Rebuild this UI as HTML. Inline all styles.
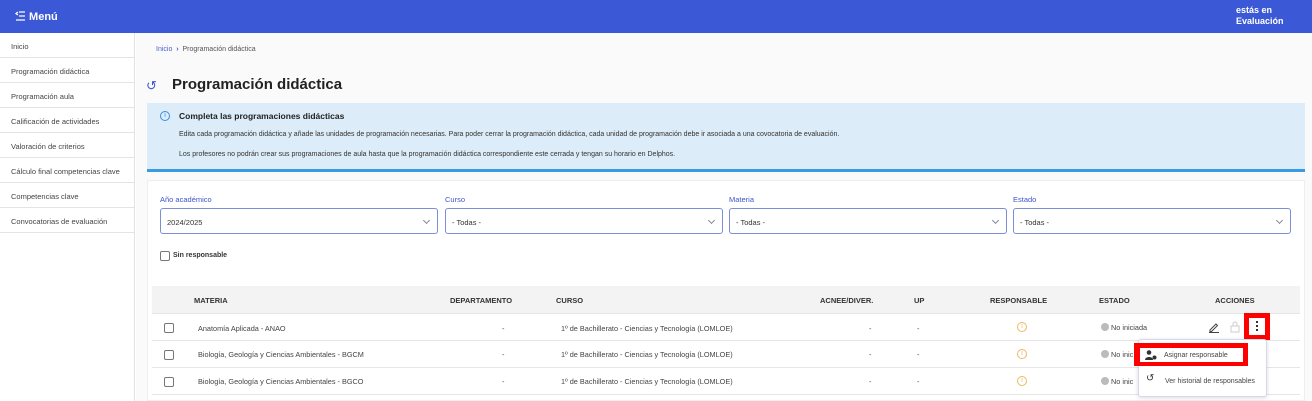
<!DOCTYPE html>
<html><head><meta charset="utf-8"><style>
*{box-sizing:border-box;margin:0;padding:0}
body{width:1312px;height:401px;overflow:hidden;background:#fff;font-family:"Liberation Sans",Arial,sans-serif;position:relative;color:#333}
.a{position:absolute;white-space:nowrap}
.hdr{left:0;top:0;width:1312px;height:33px;background:#3b59d6}
.side{left:0;top:33px;width:135px;height:368px;background:#fff;border-right:1px solid #e2e2e2}
.si{position:absolute;left:0;width:134px;height:25px;border-bottom:1px solid #e4e4e4;font-size:7.5px;color:#444;padding:9px 0 0 11px}
.main{left:136px;top:33px;width:1176px;height:368px;background:#fafafa}
.info{left:147px;top:103px;width:1158px;height:69px;background:#dcecf8;border-bottom:3px solid #3a9ce0}
.card{left:147px;top:180px;width:1158px;height:221px;background:#fff;border:1px solid #eee}
.lbl{font-size:7.5px;color:#3d55c8}
.sel{position:absolute;top:208px;height:26px;border:1px solid #7b8ed6;border-radius:3px;background:#fff;font-size:7.5px;color:#333;padding:9px 6px}
.sel:after{content:"";position:absolute;right:8px;top:9px;width:4px;height:4px;border-right:1px solid #889;border-bottom:1px solid #889;transform:rotate(45deg)}
.th{font-size:7.5px;font-weight:bold;color:#333}
.row{left:152px;width:1148px;height:27px;border-bottom:1px solid #e6e6e6;background:#fff}
.cb{position:absolute;width:10px;height:10px;border:1px solid #777;border-radius:2px;background:#fff}
.td{font-size:7.3px;color:#444}
.dot{display:inline-block;width:8px;height:8px;border-radius:50%;background:#bbb;vertical-align:-1px;margin-right:2px}
.wi{position:absolute;width:10px;height:10px;border:1px solid #f0b860;border-radius:50%;font-size:7px;color:#f0b860;text-align:center;line-height:8px}
</style></head><body>
<div class="a hdr"></div>
<div class="a" style="left:15px;top:11px;color:#fff;font-size:11px;font-weight:bold">
<svg width="11" height="10" viewBox="0 0 11 10" style="vertical-align:-1px"><path d="M4 1H10M4 5H10M1 9H10M3 1L1 2.5L3 4" stroke="#fff" stroke-width="1.3" fill="none"/></svg> Menú</div>
<div class="a" style="left:1236px;top:5px;color:#fff;font-size:9px;font-weight:bold;line-height:11px">estás en<br>Evaluación</div>
<div class="a side">
<div class="si" style="top:0">Inicio</div>
<div class="si" style="top:25px">Programación didáctica</div>
<div class="si" style="top:50px">Programación aula</div>
<div class="si" style="top:75px">Calificación de actividades</div>
<div class="si" style="top:100px">Valoración de criterios</div>
<div class="si" style="top:125px">Cálculo final competencias clave</div>
<div class="si" style="top:150px">Competencias clave</div>
<div class="si" style="top:175px">Convocatorias de evaluación</div>
</div>
<div class="a main"></div>
<div class="a" style="left:156px;top:46px;font-size:7px;color:#555"><span style="color:#4a5fc8">Inicio</span> &nbsp;<b style="color:#3b59d6">›</b>&nbsp; Programación didáctica</div>
<div class="a" style="left:146px;top:78px;font-size:13px;color:#3b59d6">↺</div>
<div class="a" style="left:172px;top:76px;font-size:15px;font-weight:bold;color:#222">Programación didáctica</div>
<div class="a info"></div>
<div class="a" style="left:160px;top:111px;width:10px;height:10px;border:1px solid #3a8ee0;border-radius:50%;font-size:7px;color:#3a8ee0;text-align:center;line-height:8px">i</div>
<div class="a" style="left:179px;top:111px;font-size:8.5px;font-weight:bold;color:#222">Completa las programaciones didácticas</div>
<div class="a" style="left:179px;top:131px;font-size:7px;color:#333">Edita cada programación didáctica y añade las unidades de programación necesarias. Para poder cerrar la programación didáctica, cada unidad de programación debe ir asociada a una covocatoria de evaluación.</div>
<div class="a" style="left:179px;top:151px;font-size:7px;color:#333">Los profesores no podrán crear sus programaciones de aula hasta que la programación didáctica correspondiente este cerrada y tengan su horario en Delphos.</div>
<div class="a card"></div>
<div class="a lbl" style="left:160px;top:195px">Año académico</div>
<div class="a lbl" style="left:445px;top:195px">Curso</div>
<div class="a lbl" style="left:729px;top:195px">Materia</div>
<div class="a lbl" style="left:1013px;top:195px">Estado</div>
<div class="sel" style="left:160px;width:278px">2024/2025</div>
<div class="sel" style="left:445px;width:278px">- Todas -</div>
<div class="sel" style="left:729px;width:278px">- Todas -</div>
<div class="sel" style="left:1013px;width:278px">- Todas -</div>
<div class="cb" style="left:160px;top:251px"></div>
<div class="a" style="left:173px;top:252px;font-size:7px;font-weight:bold;color:#333">Sin responsable</div>
<div class="a" style="left:152px;top:286px;width:1148px;height:28px;background:#f3f3f3;border-bottom:1px solid #e6e6e6"></div>
<div class="a th" style="left:194px;top:296px">MATERIA</div>
<div class="a th" style="left:450px;top:296px">DEPARTAMENTO</div>
<div class="a th" style="left:556px;top:296px">CURSO</div>
<div class="a th" style="left:820px;top:296px">ACNEE/DIVER.</div>
<div class="a th" style="left:914px;top:296px">UP</div>
<div class="a th" style="left:990px;top:296px">RESPONSABLE</div>
<div class="a th" style="left:1099px;top:296px">ESTADO</div>
<div class="a th" style="left:1215px;top:296px">ACCIONES</div>

<div class="a row" style="top:314px"></div>
<div class="a row" style="top:341px"></div>
<div class="a row" style="top:368px"></div>

<div class="cb" style="left:164px;top:323px"></div>
<div class="cb" style="left:164px;top:350px"></div>
<div class="cb" style="left:164px;top:377px"></div>
<div class="a td" style="left:198px;top:324px">Anatomía Aplicada - ANAO</div>
<div class="a td" style="left:198px;top:350px">Biología, Geología y Ciencias Ambientales - BGCM</div>
<div class="a td" style="left:198px;top:377px">Biología, Geología y Ciencias Ambientales - BGCO</div>
<div class="a td" style="left:502px;top:324px">-</div><div class="a td" style="left:502px;top:350px">-</div><div class="a td" style="left:502px;top:377px">-</div>
<div class="a td" style="left:561px;top:324px">1º de Bachillerato - Ciencias y Tecnología (LOMLOE)</div>
<div class="a td" style="left:561px;top:350px">1º de Bachillerato - Ciencias y Tecnología (LOMLOE)</div>
<div class="a td" style="left:561px;top:377px">1º de Bachillerato - Ciencias y Tecnología (LOMLOE)</div>
<div class="a td" style="left:869px;top:324px">-</div><div class="a td" style="left:869px;top:350px">-</div><div class="a td" style="left:869px;top:377px">-</div>
<div class="a td" style="left:917px;top:324px">-</div><div class="a td" style="left:917px;top:350px">-</div><div class="a td" style="left:917px;top:377px">-</div>
<div class="wi" style="left:1017px;top:322px">i</div>
<div class="wi" style="left:1017px;top:349px">i</div>
<div class="wi" style="left:1017px;top:376px">i</div>
<div class="a td" style="left:1101px;top:323px"><span class="dot"></span>No iniciada</div>
<div class="a td" style="left:1101px;top:350px"><span class="dot"></span>No inic</div>
<div class="a td" style="left:1101px;top:377px"><span class="dot"></span>No inic</div>
<svg class="a" style="left:1208px;top:321px" width="12" height="12" viewBox="0 0 12 12"><path d="M2 9L8 3L9.5 4.5L3.5 10.5H2Z M1 11.5H11" stroke="#444" stroke-width="1" fill="none"/></svg>
<svg class="a" style="left:1230px;top:321px" width="10" height="12" viewBox="0 0 10 12"><rect x="1" y="5" width="8" height="6" fill="none" stroke="#ccc"/><path d="M3 5V3a2 2 0 0 1 4 0V5" stroke="#ccc" fill="none"/></svg>
<div class="a" style="left:1244px;top:313px;width:26px;height:27px;background:#f00"></div>
<div class="a" style="left:1249px;top:318px;width:16px;height:17px;background:#fff"></div>
<div class="a" style="left:1256px;top:321px;width:2px;height:2px;background:#333;box-shadow:0 4px 0 #333,0 8px 0 #333"></div>
<div class="a" style="left:1138px;top:339px;width:129px;height:58px;background:#fff;border:1px solid #d6d8ee;border-radius:3px;box-shadow:0 1px 4px rgba(0,0,0,.15)"></div>
<div class="a" style="left:1134px;top:343px;width:114px;height:23px;background:#f00"></div>
<div class="a" style="left:1140px;top:348px;width:103px;height:14px;background:#fff"></div>
<svg class="a" style="left:1145px;top:350px" width="12" height="10" viewBox="0 0 12 10"><circle cx="4" cy="2.5" r="2.3" fill="#333"/><path d="M0 10C0 6 8 6 8 10Z" fill="#333"/><circle cx="9.5" cy="7.5" r="2" fill="#333"/></svg>
<div class="a td" style="left:1164px;top:352px;font-size:7px">Asignar responsable</div>
<div class="a" style="left:1146px;top:373px;font-size:10px;color:#333">↺</div>
<div class="a td" style="left:1165px;top:378px;font-size:7px">Ver historial de responsables</div>
</body></html>
